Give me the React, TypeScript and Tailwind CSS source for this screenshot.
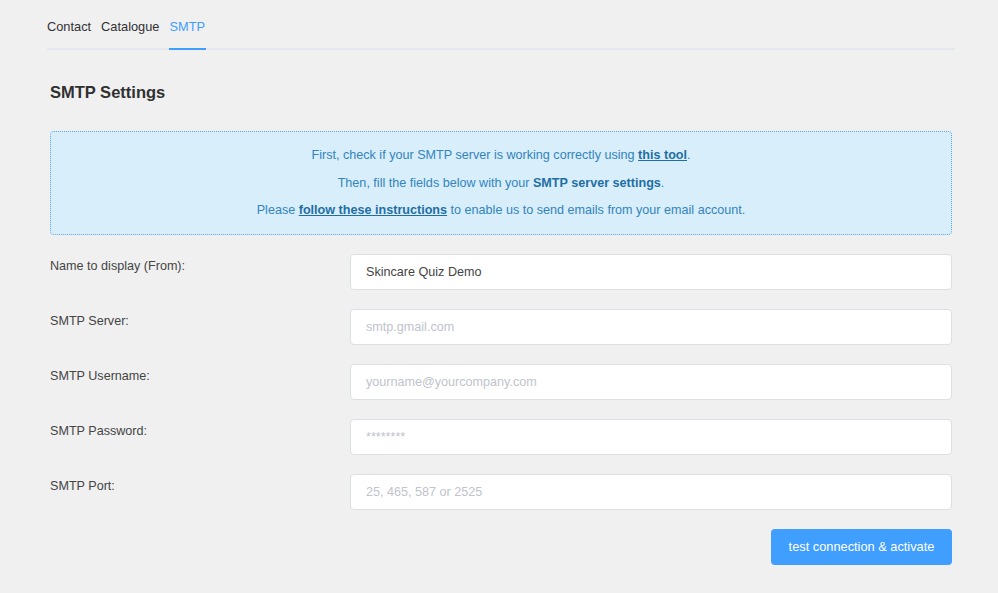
import React from "react";

const rows = [
  { label: "Name to display (From):", value: "Skincare Quiz Demo", placeholder: "" },
  { label: "SMTP Server:", value: "", placeholder: "smtp.gmail.com" },
  { label: "SMTP Username:", value: "", placeholder: "yourname@yourcompany.com" },
  { label: "SMTP Password:", value: "", placeholder: "********" },
  { label: "SMTP Port:", value: "", placeholder: "25, 465, 587 or 2525" },
];

export default function App() {
  return (
    <div
      className="min-h-[593px] w-full bg-[#f0f0f0] text-[12.6px] text-[#333]"
      style={{ fontFamily: '"Liberation Sans", Arial, sans-serif' }}
    >
      <div className="pt-[16px]">
        <div className="ml-[47px] w-[908px] border-b-2 border-[#e4e7ed] flex gap-[10px] text-[12.8px]">
          <div className="h-[32px] pt-[1px] leading-[20px] text-[#303133]">Contact</div>
          <div className="h-[32px] pt-[1px] leading-[20px] text-[#303133]">Catalogue</div>
          <div className="relative h-[32px] pt-[1px] leading-[20px] text-[#409eff]">
            SMTP
            <div className="absolute left-0 right-[-1px] bottom-[-2px] h-[2px] bg-[#409eff]" />
          </div>
        </div>

        <div className="ml-[50px] w-[902px]">
          <h2 className="mt-[32px] text-[16.5px] font-bold leading-[20px] text-[#303030]">SMTP Settings</h2>

          <div className="mt-[29px] h-[104px] rounded-[4px] border border-dotted border-[#5aa9dc] bg-[#d8eefb] text-center text-[#3284bb] pt-[10px] leading-[27.5px]">
            <p>
              First, check if your SMTP server is working correctly using{" "}
              <a className="font-bold underline text-[#1f6ea3]">this tool</a>.
            </p>
            <p>
              Then, fill the fields below with your{" "}
              <b className="font-bold text-[#1f6ea3]">SMTP server settings</b>.
            </p>
            <p>
              Please <a className="font-bold underline text-[#1f6ea3]">follow these instructions</a> to
              enable us to send emails from your email account.
            </p>
          </div>

          <div className="mt-[19px] flex flex-col gap-[19px]">
            {rows.map((r) => (
              <div key={r.label} className="flex">
                <div className="w-[300px] leading-[25px] text-[#444]">{r.label}</div>
                <input
                  className="h-[36px] flex-1 rounded-[4px] border border-[#dcdfe6] bg-white px-[15px] text-[12.6px] text-[#444] outline-none placeholder:text-[#c0c4cc]"
                  defaultValue={r.value}
                  placeholder={r.placeholder}
                />
              </div>
            ))}
          </div>

          <div className="mt-[19px] flex justify-end">
            <button className="h-[36px] w-[181px] rounded-[4px] bg-[#409eff] text-[12.8px] text-white">
              test connection &amp; activate
            </button>
          </div>
        </div>
      </div>
    </div>
  );
}
